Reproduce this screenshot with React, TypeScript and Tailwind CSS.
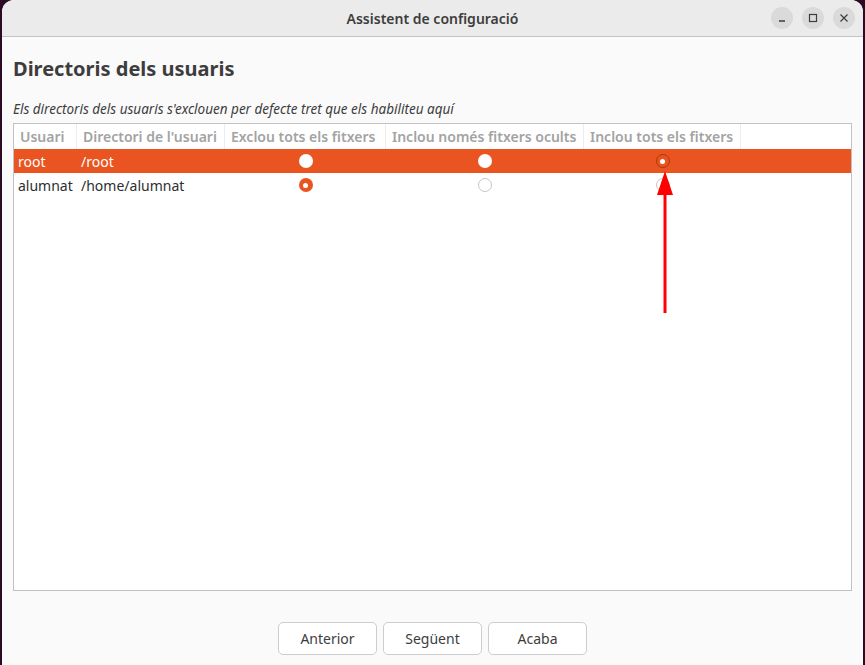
import React from "react";

type Choice = "exclude" | "hidden" | "all";

type UserRow = {
  user: string;
  dir: string;
  choice: Choice;
  selected?: boolean;
};

const rows: UserRow[] = [
  { user: "root", dir: "/root", choice: "all", selected: true },
  { user: "alumnat", dir: "/home/alumnat", choice: "exclude" },
];

const cols = "grid grid-cols-[63px_148px_161px_198px_157px_1fr]";

function Radio({ checked, onSelected }: { checked: boolean; onSelected?: boolean }) {
  if (checked && onSelected) {
    return (
      <span className="flex h-[14px] w-[14px] items-center justify-center rounded-full border border-[#a83a12] bg-[#e95420]">
        <span className="h-[5px] w-[5px] rounded-full bg-white" />
      </span>
    );
  }
  if (checked) {
    return (
      <span className="flex h-[14px] w-[14px] items-center justify-center rounded-full bg-[#e95420]">
        <span className="h-[5px] w-[5px] rounded-full bg-white" />
      </span>
    );
  }
  if (onSelected) {
    return <span className="block h-[14px] w-[14px] rounded-full bg-white" />;
  }
  return <span className="block h-[14px] w-[14px] rounded-full border border-[#c6c6c6] bg-white" />;
}

function WinButton({ children }: { children: React.ReactNode }) {
  return (
    <div className="flex h-[22px] w-[22px] items-center justify-center rounded-full bg-[#dadada] text-[#3d3d3d]">
      {children}
    </div>
  );
}

export default function App() {
  const font = { fontFamily: '"Noto Sans", "DejaVu Sans", sans-serif' };
  return (
    <div className="h-[665px] w-[865px] overflow-hidden bg-[#2c0a24] pl-[2px] pr-[2px]" style={font}>
      <div className="flex h-full w-full flex-col overflow-hidden rounded-t-[12px] bg-[#fafafa]">
        {/* title bar */}
        <div className="relative flex h-[37px] shrink-0 items-center justify-center border-b border-[#c4c4c4] bg-[#ebebeb]">
          <span className="text-[14px] font-semibold text-[#3d3d3d]">Assistent de configuració</span>
          <div className="absolute right-[8px] top-[7px] flex gap-[9px]">
            <WinButton>
              <svg width="10" height="10" viewBox="0 0 10 10">
                <path d="M2 8h6" stroke="currentColor" strokeWidth="1.3" />
              </svg>
            </WinButton>
            <WinButton>
              <svg width="10" height="10" viewBox="0 0 10 10">
                <rect x="1.5" y="1.5" width="7" height="7" fill="none" stroke="currentColor" strokeWidth="1.2" />
              </svg>
            </WinButton>
            <WinButton>
              <svg width="10" height="10" viewBox="0 0 10 10">
                <path d="M1.5 1.5l7 7M8.5 1.5l-7 7" stroke="currentColor" strokeWidth="1.2" />
              </svg>
            </WinButton>
          </div>
        </div>

        <div className="flex flex-1 flex-col px-[11px]">
          <h1 className="mt-[20px] text-[20px] font-bold leading-[24px] text-[#3d3d3d]">Directoris dels usuaris</h1>
          <p className="mt-[19px] text-[13.5px] italic leading-[18px] text-[#3d3d3d]">
            Els directoris dels usuaris s'exclouen per defecte tret que els habiliteu aquí
          </p>

          <div className="relative mt-[5px] h-[468px] border border-[#c2c2c2] bg-white">
            <div className={`${cols} h-[25px] items-center text-[14px] font-semibold text-[#a3a3a3]`}>
              <div className="h-full border-r border-[#ededed] pl-[6px] leading-[25px]">Usuari</div>
              <div className="h-full border-r border-[#ededed] pl-[6px] leading-[25px]">Directori de l'usuari</div>
              <div className="h-full border-r border-[#ededed] pl-[6px] leading-[25px]">Exclou tots els fitxers</div>
              <div className="h-full border-r border-[#ededed] pl-[6px] leading-[25px]">Inclou només fitxers ocults</div>
              <div className="h-full border-r border-[#ededed] pl-[6px] leading-[25px]">Inclou tots els fitxers</div>
              <div />
            </div>
            {rows.map((r) => (
              <div
                key={r.user}
                className={`${cols} h-[24px] items-center text-[14px] ${
                  r.selected ? "bg-[#e95420] text-white" : "text-[#2e2e2e]"
                }`}
              >
                <div className="pl-[4px]">{r.user}</div>
                <div className="pl-[4px]">{r.dir}</div>
                <div className="flex justify-center">
                  <Radio checked={r.choice === "exclude"} onSelected={r.selected} />
                </div>
                <div className="flex justify-center">
                  <Radio checked={r.choice === "hidden"} onSelected={r.selected} />
                </div>
                <div className="flex justify-center">
                  <Radio checked={r.choice === "all"} onSelected={r.selected} />
                </div>
                <div />
              </div>
            ))}

            {/* annotation arrow */}
            <svg className="absolute left-[640px] top-[46px]" width="22" height="146" viewBox="0 0 22 146">
              <path d="M11 22V143" stroke="#ff0000" strokeWidth="3" />
              <path d="M11 1L19 25H3Z" fill="#ff0000" />
            </svg>
          </div>

          <div className="mt-[31px] flex items-center justify-center gap-[6px]">
            {["Anterior", "Següent", "Acaba"].map((b) => (
              <button
                key={b}
                type="button"
                className="h-[33px] w-[99px] rounded-[5px] border border-[#cdcdcd] bg-white text-[14px] text-[#3d3d3d]"
              >
                {b}
              </button>
            ))}
          </div>
        </div>
      </div>
    </div>
  );
}
